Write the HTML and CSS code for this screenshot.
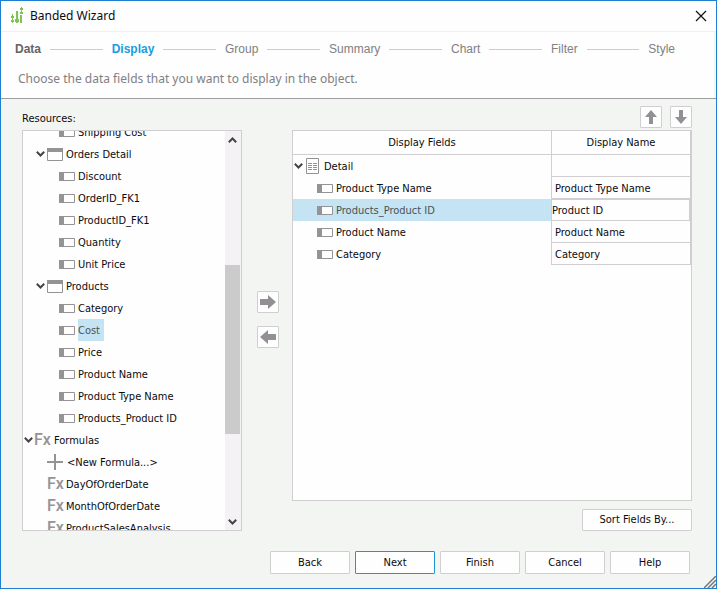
FILE: index.html
```html
<!DOCTYPE html>
<html lang="en">
<head>
<meta charset="utf-8">
<title>Banded Wizard</title>
<link rel="stylesheet" href="styles.css">
</head>
<body>
<svg class="defs" aria-hidden="true">
  <symbol id="field" viewBox="0 0 16 9"><path d="M.5.5h15v8H.5z" fill="#fdfefd" stroke="#969397"/><path d="M0 0h5v9H0z" fill="#969397"/></symbol>
  <symbol id="table" viewBox="0 0 16 13"><path d="M.5.5h15v12H.5z" fill="#fdfefd" stroke="#969397"/><path d="M0 0h16v4H0z" fill="#969397"/></symbol>
  <symbol id="chev" viewBox="0 0 9 6"><path d="M.8.8 4.5 4.5 8.2.8" fill="none" stroke="#454347" stroke-width="2"/></symbol>
  <symbol id="arrow" viewBox="0 0 16 14"><path d="M0 4.5q0-.5.5-.5H8V0l8 7-8 7v-4H.5q-.5 0-.5-.5z" fill="#929094"/></symbol>
  <symbol id="arrow-up" viewBox="0 0 12 14"><path d="M6 0l6 7H8v6.500q0 .5-.5.5h-3q-.5 0-.5-.5V7H0z" fill="#929094"/></symbol>
</svg>
<main class="window">
  <header class="titlebar">
    <svg class="logo" width="12" height="17" viewBox="0 0 12 17" fill="#7ec353"><path d="M1 7h1v2H1zM0 9h3v2H0zM1 11h1v2H1zM0 13h3v2H0zM1 15h1v1H1zM5 4h2v8H5zM4 12h4v3H4zM5 15h2v1H5zM10 0h1v1h-1zM9 1h3v2H9zM10 3h1v2h-1zM9 5h3v2H9zM9 8h2v8H9z"/></svg>
    <h1>Banded Wizard</h1>
    <button class="close" aria-label="Close"><svg width="12" height="12" viewBox="0 0 12 12"><path d="M1 1l10 10M11 1 1 11" stroke="#111" stroke-width="1.200"/></svg></button>
  </header>
  <section class="intro">
    <nav class="steps">
      <span class="done">Data</span><i></i><span class="current">Display</span><i></i><span>Group</span><i></i><span>Summary</span><i></i><span>Chart</span><i></i><span>Filter</span><i></i><span>Style</span>
    </nav>
    <p>Choose the data fields that you want to display in the object.</p>
  </section>
  <section class="content">
    <div class="resources">
      <h2>Resources:</h2>
      <div class="panel tree">
        <ul>
          <li class="field"><svg class="fi"><use href="#field"/></svg><span>Shipping Cost</span></li>
          <li class="group"><svg class="ch"><use href="#chev"/></svg><svg class="ti"><use href="#table"/></svg><span>Orders Detail</span></li>
          <li class="field"><svg class="fi"><use href="#field"/></svg><span>Discount</span></li>
          <li class="field"><svg class="fi"><use href="#field"/></svg><span>OrderID_FK1</span></li>
          <li class="field"><svg class="fi"><use href="#field"/></svg><span>ProductID_FK1</span></li>
          <li class="field"><svg class="fi"><use href="#field"/></svg><span>Quantity</span></li>
          <li class="field"><svg class="fi"><use href="#field"/></svg><span>Unit Price</span></li>
          <li class="group"><svg class="ch"><use href="#chev"/></svg><svg class="ti"><use href="#table"/></svg><span>Products</span></li>
          <li class="field"><svg class="fi"><use href="#field"/></svg><span>Category</span></li>
          <li class="field"><svg class="fi"><use href="#field"/></svg><span class="selected">Cost</span></li>
          <li class="field"><svg class="fi"><use href="#field"/></svg><span>Price</span></li>
          <li class="field"><svg class="fi"><use href="#field"/></svg><span>Product Name</span></li>
          <li class="field"><svg class="fi"><use href="#field"/></svg><span>Product Type Name</span></li>
          <li class="field"><svg class="fi"><use href="#field"/></svg><span>Products_Product ID</span></li>
          <li class="root"><svg class="ch"><use href="#chev"/></svg><b class="fx">Fx</b><span>Formulas</span></li>
          <li class="formula"><svg class="plus" width="16" height="16" viewBox="0 0 16 16"><path d="M8 0v16M0 8h16" stroke="#969397" stroke-width="2"/></svg><span>&lt;New Formula...&gt;</span></li>
          <li class="formula"><b class="fx">Fx</b><span>DayOfOrderDate</span></li>
          <li class="formula"><b class="fx">Fx</b><span>MonthOfOrderDate</span></li>
          <li class="formula"><b class="fx">Fx</b><span>ProductSalesAnalysis</span></li>
        </ul>
        <div class="scrollbar"><svg class="ch flip"><use href="#chev"/></svg><div class="track"><div class="thumb"></div></div><svg class="ch"><use href="#chev"/></svg></div>
      </div>
    </div>
    <div class="transfer">
      <button class="square" aria-label="Add field"><svg width="16" height="14"><use href="#arrow"/></svg></button>
      <button class="square" aria-label="Remove field"><svg class="flip" width="16" height="14"><use href="#arrow"/></svg></button>
    </div>
    <div class="display">
      <div class="order">
        <button class="square" aria-label="Move up"><svg width="12" height="14"><use href="#arrow-up"/></svg></button>
        <button class="square" aria-label="Move down"><svg class="flip" width="12" height="14"><use href="#arrow-up"/></svg></button>
      </div>
      <div class="panel fields">
        <table>
          <thead><tr><th>Display Fields</th><th class="name">Display Name</th></tr></thead>
          <tbody>
            <tr><td><div class="cell detail"><svg class="ch"><use href="#chev"/></svg><svg class="doc" width="13" height="16" viewBox="0 0 13 16"><path d="M.5.5h12v15H.5z" fill="none" stroke="#969397"/><path d="M2 5.500h4M7 5.500h4M2 7.500h4M7 7.500h4M2 9.500h4M7 9.500h4M2 11.500h4M7 11.500h4" stroke="#969397"/></svg><span>Detail</span></div></td><td class="name"></td></tr>
            <tr><td><div class="cell"><svg class="fi"><use href="#field"/></svg><span>Product Type Name</span></div></td><td class="name">Product Type Name</td></tr>
            <tr class="active"><td><div class="cell"><svg class="fi"><use href="#field"/></svg><span>Products_Product ID</span></div></td><td class="name"><input aria-label="Display name" value="Product ID"></td></tr>
            <tr><td><div class="cell"><svg class="fi"><use href="#field"/></svg><span>Product Name</span></div></td><td class="name">Product Name</td></tr>
            <tr><td><div class="cell"><svg class="fi"><use href="#field"/></svg><span>Category</span></div></td><td class="name">Category</td></tr>
          </tbody>
        </table>
      </div>
      <button class="sort">Sort Fields By...</button>
    </div>
  </section>
  <footer>
    <button>Back</button><button class="primary">Next</button><button>Finish</button><button>Cancel</button><button>Help</button>
  </footer>
  <svg class="grip" width="12" height="12" viewBox="0 0 12 12"><path d="M0 12 12 0M4 12l8-8M8 12l4-4" stroke="#77777a" stroke-width="1.500"/></svg>
</main>
</body>
</html>
```
FILE: styles.css
```css
* { box-sizing: border-box; }
body {
  margin: 0;
  font: 11px/22px "DejaVu Sans Condensed", "Noto Sans", sans-serif;
  color: #0c0a10;
}
h1, h2, p, ul { margin: 0; padding: 0; font-weight: normal; }
svg { flex: none; display: block; }
.defs { display: none; }
.window {
  position: relative;
  display: flex;
  flex-direction: column;
  height: 100vh;
  min-height: 400px;
  border: 1px solid #1c7fd0;
  background: #f3f5f3;
}
.titlebar {
  display: flex;
  align-items: center;
  height: 31px;
  padding: 0 9px 0 10px;
  background: #fdfefd;
  border-bottom: 1px solid #f0f0f0;
}
.logo { margin-bottom: 2px; }
.titlebar h1 {
  flex: 1;
  margin-left: 7px;
  font: 12px/16px "Noto Sans", sans-serif;
}
button {
  display: flex;
  align-items: center;
  justify-content: center;
  height: 23px;
  padding: 0;
  border: 1px solid #d0ced1;
  border-radius: 1px;
  background: #fdfefd;
  color: inherit;
  font: inherit;
}
.titlebar .close { width: 12px; height: 12px; border: 0; }
.intro {
  height: 66px;
  margin-right: 2px;
  background: #fdfefd;
}
.steps {
  display: flex;
  align-items: center;
  gap: 9px;
  padding: 7px 39px 0 14px;
  font: 12px/20px "Liberation Sans", sans-serif;
  color: #818084;
}
.steps i { flex: 1; height: 1px; background: #ccc; }
.done { font-weight: bold; color: #656468; }
.current { font-weight: bold; color: #1b9be0; }
.intro p {
  padding: 10px 17px 0;
  font: 12px/20px "Noto Sans", sans-serif;
  color: #818084;
}
.content {
  flex: 1;
  min-height: 0;
  display: grid;
  grid-template-columns: 220fr 50px 400fr;
  padding: 7px 24px 0 21px;
  border-top: 1px solid #9f9c9f;
}
.resources, .display { display: flex; flex-direction: column; min-height: 0; min-width: 0; }
.resources h2 { height: 24px; font: inherit; line-height: 26px; }
.panel {
  flex: 1;
  min-height: 0;
  border: 1px solid #d0ced1;
  background: #fdfefd;
}
.tree { display: flex; overflow: hidden; }
.tree ul { flex: 1; margin-top: -10px; list-style: none; white-space: nowrap; }
.tree li { display: flex; align-items: center; height: 22px; }
.tree span, .cell span { padding-top: 2px; line-height: 20px; }
.field { padding-left: 36px; gap: 3px; }
.group { padding-left: 13px; gap: 2px; }
.formula { padding-left: 24px; gap: 4px; }
.root { padding-left: 1px; gap: 1px; }
.group span { padding-left: 1px; }
.root span { padding-left: 4px; }
.tree .selected { padding-right: 4px; background: #c4e4f4; color: #4a5257; }
.fi { width: 16px; height: 9px; }
.ti { width: 16px; height: 13px; }
.ch { width: 9px; height: 6px; }
.fx { width: 15px; font: 500 16px/22px Roboto, sans-serif; color: #969397; }
.flip { transform: rotate(180deg); }
.scrollbar {
  display: flex;
  flex-direction: column;
  align-items: center;
  width: 16px;
  padding: 6px 1px 5px 0;
  background: #f4f2f5;
}
.track { flex: 1; width: 15px; padding-top: 122px; }
.thumb { height: 169px; background: #cacbca; }
.transfer { display: flex; flex-direction: column; align-items: center; gap: 13px; padding: 185px 0 0 2px; }
.square { width: 22px; height: 22px; }
.order { display: flex; justify-content: flex-end; gap: 8px; height: 24px; }
.fields { overflow: hidden; }
table { width: 100%; table-layout: fixed; border-collapse: separate; border-spacing: 0; }
th { height: 24px; padding: 0; font-weight: normal; border-bottom: 1px solid #d0ced1; line-height: 22px; }
td { height: 22px; padding: 0; }
.name { width: 140px; border: solid #d0ced1; border-width: 0 1px 1px; }
td.name { padding: 2px 0 0 3px; line-height: 19px; }
.cell { display: flex; align-items: center; gap: 3px; height: 22px; padding-left: 24px; }
.cell.detail { padding-left: 1px; }
.detail span { padding-left: 2px; }
.active td:first-child { background: #c4e4f4; color: #4a5257; }
.active td.name { padding: 0; }
input {
  display: block;
  width: 100%;
  height: 21px;
  padding: 0;
  border: solid #d0ced1;
  border-width: 1px 1px 0 0;
  border-radius: 0;
  background: #fdfefd;
  color: inherit;
  font: inherit;
  outline: 0;
}
.sort { align-self: flex-end; width: 110px; height: 22px; margin-top: 8px; }
footer { display: flex; justify-content: flex-end; gap: 5px; padding: 20px 26px 14px; }
footer button { width: 80px; }
footer .primary { border-color: #1d96d6; }
.grip { position: absolute; right: 0; bottom: 0; }
```
